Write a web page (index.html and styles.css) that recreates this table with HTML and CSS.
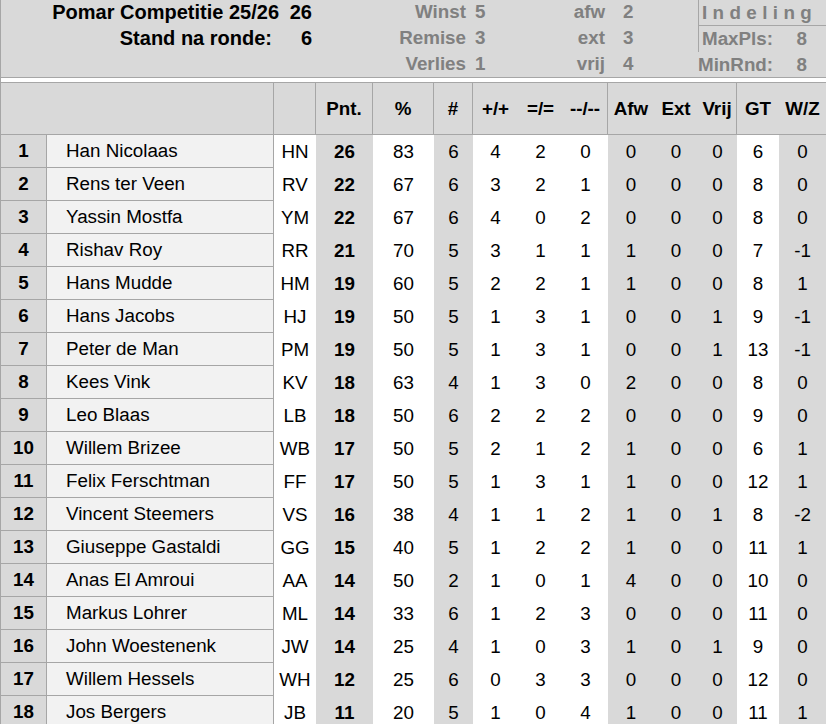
FILE: index.html
```html
<!DOCTYPE html>
<html lang="nl">
<head>
<meta charset="utf-8">
<title>Pomar Competitie 25/26</title>
<link rel="stylesheet" href="styles.css">
</head>
<body>
<div class="sheet">
  <div class="top">
    <div class="title">
      <div class="t-row"><span class="t-label">Pomar Competitie 25/26</span><span class="t-val">26</span></div>
      <div class="t-row"><span class="t-label t-label2">Stand na ronde:</span><span class="t-val">6</span></div>
    </div>
    <div class="stats s1">
      <span class="s-label">Winst</span><span class="s-val">5</span>
      <span class="s-label">Remise</span><span class="s-val">3</span>
      <span class="s-label">Verlies</span><span class="s-val">1</span>
    </div>
    <div class="stats s2">
      <span class="s-label">afw</span><span class="s-val">2</span>
      <span class="s-label">ext</span><span class="s-val">3</span>
      <span class="s-label">vrij</span><span class="s-val">4</span>
    </div>
    <div class="indeling">
      <div class="ind-box">
        <div class="ind-title">Indeling</div>
        <div class="ind-row ind-max"><span>MaxPls:</span><span>8</span></div>
      </div>
      <div class="ind-row ind-min"><span>MinRnd:</span><span>8</span></div>
    </div>
  </div>

  <div class="thead">
    <span class="h-blank"></span>
    <span class="h-sep"></span>
    <span class="h-sep">Pnt.</span>
    <span class="h-sep">%</span>
    <span class="h-sep">#</span>
    <span>+/+</span>
    <span>=/=</span>
    <span class="h-sep">--/--</span>
    <span>Afw</span>
    <span>Ext</span>
    <span class="h-sep">Vrij</span>
    <span>GT</span>
    <span>W/Z</span>
  </div>

  <div class="tbody">
    <div class="row"><span>1</span><span>Han Nicolaas</span><span>HN</span><span>26</span><span>83</span><span>6</span><span>4</span><span>2</span><span>0</span><span>0</span><span>0</span><span>0</span><span>6</span><span>0</span></div>
    <div class="row"><span>2</span><span>Rens ter Veen</span><span>RV</span><span>22</span><span>67</span><span>6</span><span>3</span><span>2</span><span>1</span><span>0</span><span>0</span><span>0</span><span>8</span><span>0</span></div>
    <div class="row"><span>3</span><span>Yassin Mostfa</span><span>YM</span><span>22</span><span>67</span><span>6</span><span>4</span><span>0</span><span>2</span><span>0</span><span>0</span><span>0</span><span>8</span><span>0</span></div>
    <div class="row"><span>4</span><span>Rishav Roy</span><span>RR</span><span>21</span><span>70</span><span>5</span><span>3</span><span>1</span><span>1</span><span>1</span><span>0</span><span>0</span><span>7</span><span>-1</span></div>
    <div class="row"><span>5</span><span>Hans Mudde</span><span>HM</span><span>19</span><span>60</span><span>5</span><span>2</span><span>2</span><span>1</span><span>1</span><span>0</span><span>0</span><span>8</span><span>1</span></div>
    <div class="row"><span>6</span><span>Hans Jacobs</span><span>HJ</span><span>19</span><span>50</span><span>5</span><span>1</span><span>3</span><span>1</span><span>0</span><span>0</span><span>1</span><span>9</span><span>-1</span></div>
    <div class="row"><span>7</span><span>Peter de Man</span><span>PM</span><span>19</span><span>50</span><span>5</span><span>1</span><span>3</span><span>1</span><span>0</span><span>0</span><span>1</span><span>13</span><span>-1</span></div>
    <div class="row"><span>8</span><span>Kees Vink</span><span>KV</span><span>18</span><span>63</span><span>4</span><span>1</span><span>3</span><span>0</span><span>2</span><span>0</span><span>0</span><span>8</span><span>0</span></div>
    <div class="row"><span>9</span><span>Leo Blaas</span><span>LB</span><span>18</span><span>50</span><span>6</span><span>2</span><span>2</span><span>2</span><span>0</span><span>0</span><span>0</span><span>9</span><span>0</span></div>
    <div class="row"><span>10</span><span>Willem Brizee</span><span>WB</span><span>17</span><span>50</span><span>5</span><span>2</span><span>1</span><span>2</span><span>1</span><span>0</span><span>0</span><span>6</span><span>1</span></div>
    <div class="row"><span>11</span><span>Felix Ferschtman</span><span>FF</span><span>17</span><span>50</span><span>5</span><span>1</span><span>3</span><span>1</span><span>1</span><span>0</span><span>0</span><span>12</span><span>1</span></div>
    <div class="row"><span>12</span><span>Vincent Steemers</span><span>VS</span><span>16</span><span>38</span><span>4</span><span>1</span><span>1</span><span>2</span><span>1</span><span>0</span><span>1</span><span>8</span><span>-2</span></div>
    <div class="row"><span>13</span><span>Giuseppe Gastaldi</span><span>GG</span><span>15</span><span>40</span><span>5</span><span>1</span><span>2</span><span>2</span><span>1</span><span>0</span><span>0</span><span>11</span><span>1</span></div>
    <div class="row"><span>14</span><span>Anas El Amroui</span><span>AA</span><span>14</span><span>50</span><span>2</span><span>1</span><span>0</span><span>1</span><span>4</span><span>0</span><span>0</span><span>10</span><span>0</span></div>
    <div class="row"><span>15</span><span>Markus Lohrer</span><span>ML</span><span>14</span><span>33</span><span>6</span><span>1</span><span>2</span><span>3</span><span>0</span><span>0</span><span>0</span><span>11</span><span>0</span></div>
    <div class="row"><span>16</span><span>John Woestenenk</span><span>JW</span><span>14</span><span>25</span><span>4</span><span>1</span><span>0</span><span>3</span><span>1</span><span>0</span><span>1</span><span>9</span><span>0</span></div>
    <div class="row"><span>17</span><span>Willem Hessels</span><span>WH</span><span>12</span><span>25</span><span>6</span><span>0</span><span>3</span><span>3</span><span>0</span><span>0</span><span>0</span><span>12</span><span>0</span></div>
    <div class="row"><span>18</span><span>Jos Bergers</span><span>JB</span><span>11</span><span>20</span><span>5</span><span>1</span><span>0</span><span>4</span><span>1</span><span>0</span><span>0</span><span>11</span><span>1</span></div>
  </div>
</div>
</body>
</html>
```

FILE: styles.css
```css
html, body {
  margin: 0;
  padding: 0;
  background: #ffffff;
}

body {
  font-family: "Liberation Sans", Arial, sans-serif;
  color: #000000;
}

.sheet {
  width: 826px;
  box-sizing: border-box;
  border-left: 1px solid #a6a6a6;
}

/* ---------- top info block ---------- */
.top {
  display: flex;
  height: 77px;
  background: #d9d9d9;
  border-bottom: 1px solid #a6a6a6;
  font-weight: bold;
  font-size: 18.8px;
  line-height: 26px;
}

.title {
  width: 311px;
  margin-top: -1px;
  font-size: 20px;
}

.t-row {
  display: flex;
  justify-content: flex-end;
  height: 26px;
}

.t-val {
  width: 33px;
  text-align: right;
}

.t-label2 {
  margin-right: 7px;
}

.stats {
  display: grid;
  margin-top: -1px;
  color: #808080;
  grid-auto-rows: 26px;
}

.s1 {
  width: 202px;
  grid-template-columns: 154px 1fr;
}

.s2 {
  width: 184px;
  grid-template-columns: 91px 1fr;
}

.s-label {
  text-align: right;
}

.s1 .s-val {
  padding-left: 9px;
}

.s2 .s-val {
  padding-left: 18px;
}

.indeling {
  width: 128px;
  color: #808080;
}

.ind-box {
  border-left: 1px solid #a6a6a6;
}

.ind-title {
  height: 25px;
  line-height: 25px;
  border-bottom: 1px solid #a6a6a6;
  padding-left: 3px;
  letter-spacing: 5.4px;
}

.ind-row {
  display: flex;
  justify-content: space-between;
  padding-right: 19px;
}

.ind-max {
  height: 26px;
  padding-left: 3px;
}

.ind-min {
  height: 25px;
  padding-left: 0;
}

/* ---------- table header ---------- */
.thead {
  display: grid;
  grid-template-columns: 273px 42px 57px 61px 39px 45px 45px 45px 46px 44px 39px 42px 47px;
  height: 53px;
  box-sizing: border-box;
  margin-top: 4px;
  background: #d9d9d9;
  border-top: 1px solid #a6a6a6;
  border-bottom: 1px solid #a6a6a6;
  font-weight: bold;
  font-size: 18.8px;
}

.thead > span {
  display: flex;
  align-items: center;
  justify-content: center;
  box-sizing: border-box;
}

.thead > .h-blank,
.thead > .h-sep {
  border-right: 1px solid #a6a6a6;
}

/* ---------- table body ---------- */
.row {
  display: grid;
  grid-template-columns: 46px 227px 42px 57px 61px 39px 45px 45px 45px 46px 44px 39px 42px 47px;
  height: 33px;
  font-size: 18.8px;
}

.row > span {
  display: flex;
  align-items: center;
  justify-content: center;
  box-sizing: border-box;
  background: #ffffff;
}

.row > span:nth-child(1) {
  background: #d9d9d9;
  font-weight: bold;
  border-right: 1px solid #a6a6a6;
  border-bottom: 1px solid #a6a6a6;
}

.row > span:nth-child(2) {
  background: #f2f2f2;
  justify-content: flex-start;
  padding-left: 19px;
  border-right: 1px solid #a6a6a6;
  border-bottom: 1px solid #a6a6a6;
}

.row > span:nth-child(4) {
  background: #d9d9d9;
  font-weight: bold;
}

.row > span:nth-child(6),
.row > span:nth-child(10),
.row > span:nth-child(11),
.row > span:nth-child(12),
.row > span:nth-child(14) {
  background: #d9d9d9;
}
```
